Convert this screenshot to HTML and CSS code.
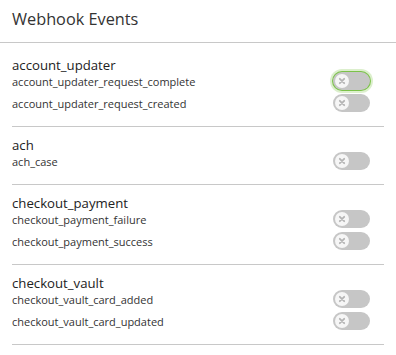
FILE: index.html
```html
<!DOCTYPE html>
<html lang="en">
<head>
  <meta charset="UTF-8">
  <title>Webhook Events</title>
  <link rel="stylesheet" href="styles.css">
</head>
<body>

  <div class="panel">
    <div class="panel-header">
      <h1>Webhook Events</h1>
    </div>

    <div class="groups">
      <div class="group first">
        <h2>account_updater</h2>
        <div class="event">
          <span>account_updater_request_complete</span>
          <button class="toggle focused" aria-label="toggle"><span class="knob"><svg viewBox="0 0 14 14"><path d="M4.8 4.8 9.2 9.2M9.2 4.8 4.8 9.2"/></svg></span></button>
        </div>
        <div class="event">
          <span>account_updater_request_created</span>
          <button class="toggle" aria-label="toggle"><span class="knob"><svg viewBox="0 0 14 14"><path d="M4.8 4.8 9.2 9.2M9.2 4.8 4.8 9.2"/></svg></span></button>
        </div>
      </div>

      <div class="group">
        <h2>ach</h2>
        <div class="event">
          <span>ach_case</span>
          <button class="toggle" aria-label="toggle"><span class="knob"><svg viewBox="0 0 14 14"><path d="M4.8 4.8 9.2 9.2M9.2 4.8 4.8 9.2"/></svg></span></button>
        </div>
      </div>

      <div class="group">
        <h2>checkout_payment</h2>
        <div class="event">
          <span>checkout_payment_failure</span>
          <button class="toggle" aria-label="toggle"><span class="knob"><svg viewBox="0 0 14 14"><path d="M4.8 4.8 9.2 9.2M9.2 4.8 4.8 9.2"/></svg></span></button>
        </div>
        <div class="event">
          <span>checkout_payment_success</span>
          <button class="toggle" aria-label="toggle"><span class="knob"><svg viewBox="0 0 14 14"><path d="M4.8 4.8 9.2 9.2M9.2 4.8 4.8 9.2"/></svg></span></button>
        </div>
      </div>

      <div class="group">
        <h2>checkout_vault</h2>
        <div class="event">
          <span>checkout_vault_card_added</span>
          <button class="toggle" aria-label="toggle"><span class="knob"><svg viewBox="0 0 14 14"><path d="M4.8 4.8 9.2 9.2M9.2 4.8 4.8 9.2"/></svg></span></button>
        </div>
        <div class="event">
          <span>checkout_vault_card_updated</span>
          <button class="toggle" aria-label="toggle"><span class="knob"><svg viewBox="0 0 14 14"><path d="M4.8 4.8 9.2 9.2M9.2 4.8 4.8 9.2"/></svg></span></button>
        </div>
      </div>
    </div>
  </div>

</body>
</html>
```

FILE: styles.css
```css
/* Base */
* { box-sizing: border-box; margin: 0; padding: 0; }
body {
  font-family: 'Open Sans', sans-serif;
  background: #fff;
  color: #333;
}

/* Header */
.panel-header {
  padding: 6px 12px 10px;
  border-bottom: 1px solid #c8c8c8;
}
h1 {
  font-size: 16.3px;
  line-height: 26px;
  font-weight: 400;
  color: #333;
}

/* Groups */
.groups {
  padding: 0 12px;
}
.group {
  padding: 9px 0 14px;
  border-bottom: 1px solid #c8c8c8;
}
.group.first {
  padding-top: 13px;
}
h2 {
  font-size: 13.2px;
  line-height: 18px;
  font-weight: 400;
  color: #222;
  margin-bottom: -2px;
}
.event {
  display: flex;
  align-items: center;
  justify-content: space-between;
  height: 18px;
  font-size: 11px;
  color: #333;
}
.event + .event {
  margin-top: 4px;
}

/* Toggle */
.toggle {
  position: relative;
  width: 37px;
  height: 18px;
  margin-right: 14px;
  border: none;
  border-radius: 9px;
  background: #c6c6c6;
  cursor: pointer;
}
.toggle.focused {
  box-shadow: 0 0 0 1px #7cc24a, 0 0 0 3px #dcefcd;
}
.knob {
  position: absolute;
  top: 2px;
  left: 2px;
  width: 14px;
  height: 14px;
  border-radius: 50%;
  background: #f6f6f6;
  display: flex;
}
.knob svg {
  width: 14px;
  height: 14px;
  stroke: #b4b4b4;
  stroke-width: 1.8;
  stroke-linecap: round;
  fill: none;
}
```
